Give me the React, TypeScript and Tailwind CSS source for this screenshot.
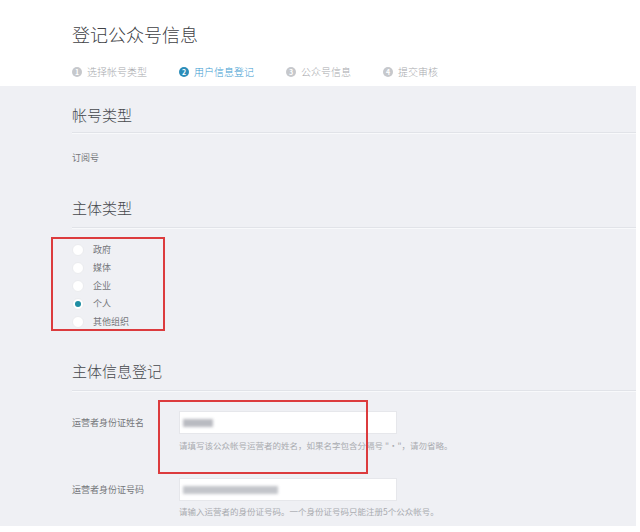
const steps = [
  { n: 1, label: "选择帐号类型", active: false },
  { n: 2, label: "用户信息登记", active: true },
  { n: 3, label: "公众号信息", active: false },
  { n: 4, label: "提交审核", active: false },
];

const subjectTypes = ["政府", "媒体", "企业", "个人", "其他组织"];

const SectionHeader = ({ title, className }: { title: string; className: string }) => (
  <div
    className={`${className} border-b border-[#e1e3e8] shadow-[0_1px_0_#f8f9fb] text-[15px] leading-[20px] font-light text-[#46484c]`}
  >
    {title}
  </div>
);

const App = () => {
  return (
    <div className="w-[640px] h-[532px] bg-white overflow-hidden font-['Noto_Sans_CJK_SC',sans-serif]">
      {/* Top: title + steps */}
      <div className="h-[86px] pl-[72px] pt-[22px]">
        <h1 className="text-[18px] leading-[24px] font-light text-[#404145]">登记公众号信息</h1>
        <div className="mt-[19px] flex items-center gap-[32px] text-[10px] leading-[14px] font-light">
          {steps.map((s) => (
            <div key={s.n} className="flex items-center gap-[5px]">
              <span
                className={`w-[10px] h-[10px] rounded-full flex items-center justify-center text-[7px] leading-none font-bold text-white ${
                  s.active ? "bg-[#2b8db9]" : "bg-[#c6c8cc]"
                }`}
              >
                {s.n}
              </span>
              <span className={s.active ? "text-[#3b9ad0]" : "text-[#a8aaae]"}>{s.label}</span>
            </div>
          ))}
        </div>
      </div>

      {/* Form panel */}
      <div className="w-[636px] h-[440px] bg-[#eff0f4] pl-[72px]">
        <SectionHeader title="帐号类型" className="h-[47px] pt-[19px]" />
        <p className="mt-[19px] text-[9px] leading-[12px] text-[#75777b]">订阅号</p>

        <SectionHeader title="主体类型" className="h-[64px] pt-[34px]" />
        <div className="relative mt-[13px] flex flex-col">
          {subjectTypes.map((t) => (
            <label key={t} className="h-[18px] flex items-center gap-[9px]">
              <span className="w-[12px] h-[12px] rounded-full bg-white border border-[#ebecef] flex items-center justify-center">
                {t === "个人" && <span className="w-[6px] h-[6px] rounded-full bg-[#1f8ea3]" />}
              </span>
              <span className="text-[9px] leading-[12px] text-[#75777b]">{t}</span>
            </label>
          ))}
          <div className="absolute left-[-21px] top-[-4px] w-[114px] h-[94px] border-2 border-[#dc3b3d]" />
        </div>

        <SectionHeader title="主体信息登记" className="h-[60px] pt-[30px]" />

        <div className="relative mt-[20px]">
          <div className="flex items-center">
            <span className="w-[107px] text-[9px] leading-[12px] text-[#75777b]">运营者身份证姓名</span>
            <div className="w-[218px] h-[23px] bg-white border border-[#e6e7eb] flex items-center pl-[3px]">
              <div className="w-[30px] h-[8px] bg-[#b9bbc1] blur-[1.5px]" />
            </div>
          </div>
          <p className="ml-[107px] mt-[5px] text-[8.5px] leading-[12px] text-[#a9abb0] whitespace-nowrap">
            请填写该公众帐号运营者的姓名，如果名字包含分隔号 "·"，请勿省略。
          </p>
          <div className="absolute left-[86px] top-[-11px] w-[210px] h-[74px] border-2 border-[#dc3b3d]" />
        </div>

        <div className="mt-[27px]">
          <div className="flex items-center">
            <span className="w-[107px] text-[9px] leading-[12px] text-[#75777b]">运营者身份证号码</span>
            <div className="w-[218px] h-[23px] bg-white border border-[#e6e7eb] flex items-center pl-[3px]">
              <div className="w-[95px] h-[8px] bg-[#c3c5ca] blur-[1.5px]" />
            </div>
          </div>
          <p className="ml-[107px] mt-[4px] text-[8.5px] leading-[12px] text-[#a9abb0] whitespace-nowrap">
            请输入运营者的身份证号码。一个身份证号码只能注册5个公众帐号。
          </p>
        </div>
      </div>
    </div>
  );
};

export default App;
